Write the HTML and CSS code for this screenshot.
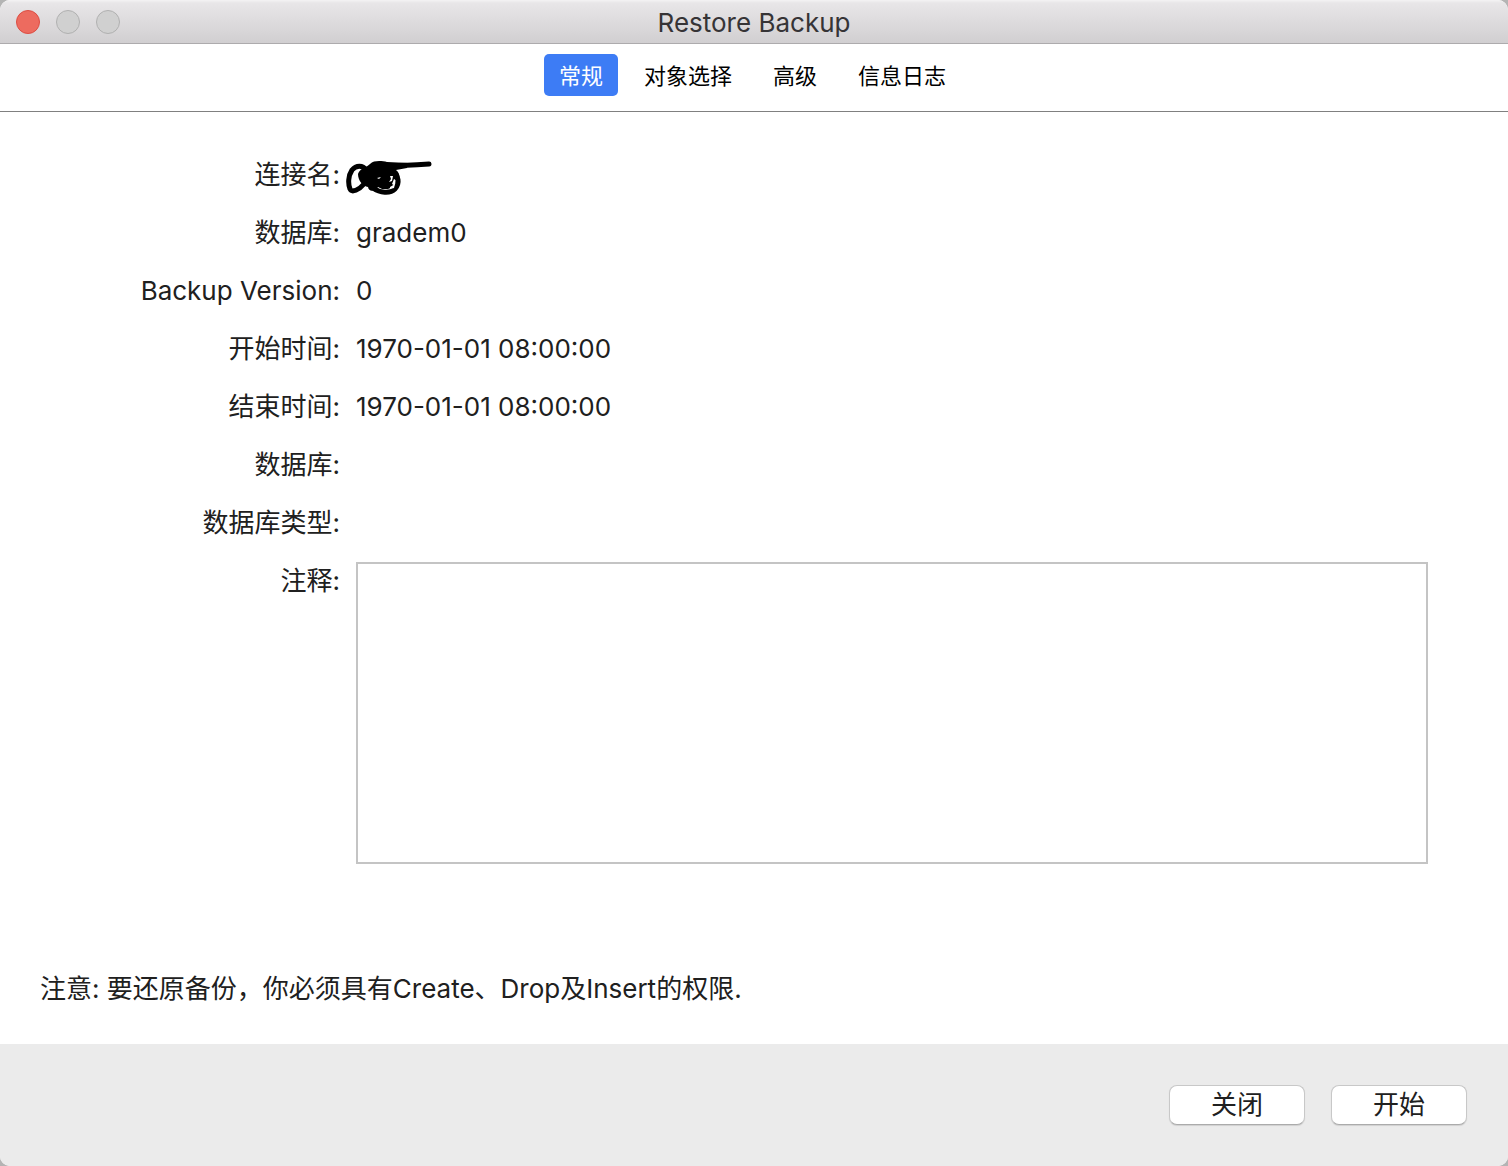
FILE: index.html
```html
<!DOCTYPE html>
<html lang="zh-CN">
<head>
  <meta charset="utf-8">
  <title>Restore Backup</title>
  <link rel="stylesheet" href="styles.css">
</head>
<body>
  <div class="window">
    <header class="titlebar">
      <div class="lights">
        <button class="light light-close" type="button" aria-label="Close"></button>
        <button class="light" type="button" aria-label="Minimize" disabled></button>
        <button class="light" type="button" aria-label="Zoom" disabled></button>
      </div>
      <h1 class="title">Restore Backup</h1>
    </header>

    <nav class="tabs">
      <button class="tab tab-active" type="button">常规</button>
      <button class="tab" type="button">对象选择</button>
      <button class="tab" type="button">高级</button>
      <button class="tab" type="button">信息日志</button>
    </nav>

    <main class="content">
      <dl class="fields">
        <dt>连接名:</dt>
        <dd>
          <svg class="scribble" width="90" height="42" viewBox="0 0 90 42" aria-hidden="true">
            <g fill="none" stroke="#000" stroke-linecap="round" stroke-linejoin="round">
              <path stroke-width="5" d="M20 14C17 9 10 9 6 14C2 20 2 28 4 33C6 37 13 34 18 28"/>
              <path stroke-width="5" d="M32 9C40 10 50 10 83 8"/>
              <path stroke-width="5" d="M46 15C53 20 54 27 49 33C44 38 34 37 27 32"/>
            </g>
            <path d="M12 18C14 12 20 12 24 8C28 4 36 5 41 6L62 7L61 12L50 14C55 18 54 24 51 25L48 23L46 28L49 30L42 33L36 33L32 31C28 36 23 36 22 31C17 30 12 25 12 18Z"/>
            <path fill="#fff" d="M44 20L47 20L46 25L43 26L45 23ZM31 22L35 21L33 23ZM44 31L49 28L48 32L44 33Z"/>
          </svg>
        </dd>
        <dt>数据库:</dt>
        <dd>gradem0</dd>
        <dt>Backup Version:</dt>
        <dd>0</dd>
        <dt>开始时间:</dt>
        <dd>1970-01-01 08:00:00</dd>
        <dt>结束时间:</dt>
        <dd>1970-01-01 08:00:00</dd>
        <dt>数据库:</dt>
        <dd></dd>
        <dt>数据库类型:</dt>
        <dd></dd>
        <dt><label for="comment">注释:</label></dt>
        <dd><textarea class="comment" id="comment"></textarea></dd>
      </dl>
      <p class="note">注意: 要还原备份，你必须具有Create、Drop及Insert的权限.</p>
    </main>

    <footer class="actions">
      <button class="action" type="button">关闭</button>
      <button class="action" type="button">开始</button>
    </footer>
  </div>
</body>
</html>
```
FILE: styles.css
```css
* {
  box-sizing: border-box;
}

body {
  margin: 0;
  background: #b4b4b4;
  color: #202020;
  font: 26px/38px Inter, "Noto Sans CJK SC", sans-serif;
}

button,
textarea {
  font: inherit;
  color: inherit;
}

.window {
  display: flex;
  flex-direction: column;
  min-height: 100vh;
  overflow: hidden;
  border-radius: 10px;
  background: #fff;
}

.titlebar {
  display: grid;
  grid-template-columns: 1fr auto 1fr;
  align-items: center;
  height: 44px;
  padding: 0 16px;
  border-bottom: 1px solid #adabad;
  background: linear-gradient(#f4f3f4, #e8e6e8 3px, #d1cfd1);
}

.lights {
  display: flex;
  gap: 16px;
}

.light {
  width: 24px;
  height: 24px;
  padding: 0;
  border: 1px solid #b0b0b0;
  border-radius: 50%;
  background: #d0d0d0;
}

.light-close {
  border-color: #dc4d43;
  background: #ed6b5f;
}

.title {
  margin: 0;
  padding-top: 2px;
  color: #363436;
  font-size: 26px;
  font-weight: 400;
}

.tabs {
  display: flex;
  justify-content: center;
  gap: 11px;
  padding: 10px 3px 15px 0;
  border-bottom: 1px solid #808080;
}

.tab {
  height: 42px;
  padding: 2px 15px 0;
  border: 0;
  border-radius: 5px;
  background: none;
  color: #000;
  font-size: 22px;
  line-height: 40px;
}

.tab-active {
  background: #3d7cf5;
  color: #fff;
}

.content {
  display: flex;
  flex: 1;
  flex-direction: column;
  padding: 44px 80px 36px 40px;
}

.fields {
  display: grid;
  grid-template-columns: 300px 1fr;
  grid-auto-rows: minmax(38px, auto);
  gap: 20px 16px;
  margin: 0;
}

.fields dt {
  text-align: right;
}

.fields dd {
  display: flex;
  margin: 0;
}

.scribble {
  margin: 0 0 -4px -10px;
}

.comment {
  flex: 1;
  height: 302px;
  padding: 4px;
  border: 2px solid #c4c4c4;
  background: #fff;
  resize: none;
}

.note {
  margin: auto 0 0;
}

.actions {
  display: flex;
  justify-content: flex-end;
  gap: 26px;
  padding: 41px;
  background: #ebebeb;
}

.action {
  width: 136px;
  height: 40px;
  padding: 0;
  border: 1px solid #c8c8c8;
  border-bottom-color: #ababab;
  border-radius: 8px;
  background: #fff;
  box-shadow: 0 1px 1px #d0d0d0;
}
```
